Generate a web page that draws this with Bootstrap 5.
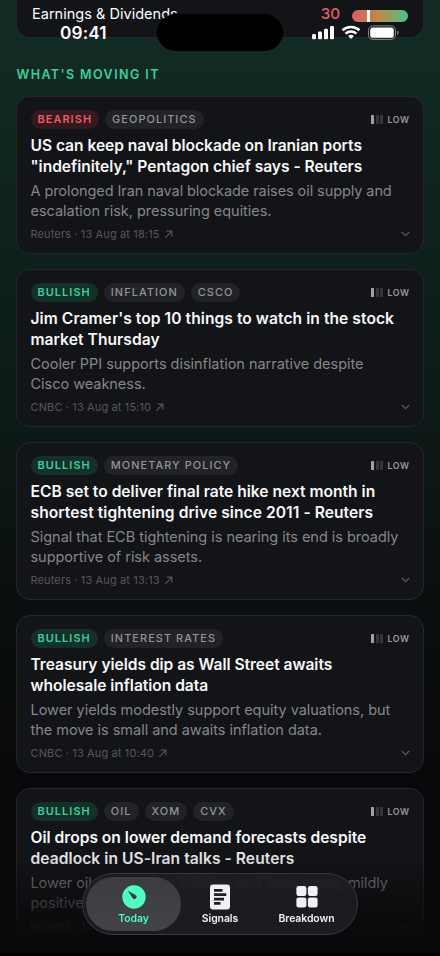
<!DOCTYPE html>
<html lang="en">
<head>
<meta charset="utf-8">
<meta name="viewport" content="width=device-width, initial-scale=1">
<title>Today</title>
<link rel="stylesheet" href="https://cdn.jsdelivr.net/npm/bootstrap@5.3.0/dist/css/bootstrap.min.css">
<style>
body{font-family:Inter,"Liberation Sans",sans-serif;background:#09090b;color:#fff;margin:0}
.screen{width:440px;height:956px;background:linear-gradient(180deg,#122c25 0,#112923 90px,#0e211c 250px,#0d1916 430px,#0a0e0e 620px,#09090b 790px,#09090b 952px,#000 953px)}
.panel{background:#131417;border:1px solid #25272a;border-radius:14px}
.factors{height:38px;margin:0 16px;border-top:0;border-radius:0 0 14px 14px;padding:5px 15px 0}
.factor-name{font-size:14.5px;line-height:18px;letter-spacing:.02px}
.factor-score{font-size:15.2px;line-height:18px;color:#e85d6b;font-weight:500;margin-right:12px}
.meter{width:56px;height:12px;border-radius:6px;background:linear-gradient(90deg,#de5c68,#bb8b4c 50%,#45c48c);margin-top:5px}
.meter i{display:block;width:3px;height:12px;background:#fff;margin-left:15px}
.statusbar{top:0;left:0;width:440px;height:60px}
.clock{left:60px;top:23px;font-size:17.3px;line-height:20px;font-weight:600;letter-spacing:.1px}
.island{left:157px;top:14px;width:126px;height:37px;border-radius:19px;background:#000}
.sig{left:311px;top:24px}
.section-title{color:#3ecf96;font-size:12.5px;line-height:16px;font-weight:600;letter-spacing:1.42px;margin:29px 0 13px 16.5px}
.feed{margin:0 16px;gap:15px}
.story{height:158px;padding:13px 13.5px 0}
.chips{gap:6px;height:19px}
.chip{height:19px;line-height:19px;border-radius:10px;padding:0 7px;font-size:10.9px;font-weight:500;letter-spacing:1.08px;background:#222327;color:#94959a}
.bull,.bear{font-weight:600}
.bull{background:#15302a;color:#3ecf96}
.bear{background:#34191f;color:#e85d6b}
.level{font-size:8.8px;font-weight:600;letter-spacing:.55px;color:#97989d;gap:1.5px}
.level i{width:3px;height:9px;background:#36373b;border-radius:.5px}
.level i:first-child{background:#a0a1a5}
.level span{margin-left:3px}
.headline{font-size:15.6px;line-height:21px;font-weight:600;margin:6px 0 0;white-space:nowrap;color:#f8f8fa}
.wide{letter-spacing:.06px}
.tight{letter-spacing:-.04px}
.summary{font-size:14.5px;line-height:20px;letter-spacing:-.03px;color:#85868b;margin:4px 0 0;white-space:nowrap}
.snug{letter-spacing:-.08px}
.source{font-size:11px;line-height:14px;letter-spacing:.13px;color:#56575c;margin-top:6px}
.fade-out{top:845px;left:0;width:440px;height:108px;background:linear-gradient(180deg,rgba(9,9,11,0) 0,rgba(9,9,11,.12) 15%,rgba(9,9,11,.36) 34%,rgba(9,9,11,.6) 53%,rgba(9,9,11,.87) 75%,rgba(9,9,11,.95))}
.tabs{left:82px;top:873px;width:276px;height:62px;border-radius:31px;background:rgba(30,31,35,.88);border:1px solid #38393d;padding:3px;backdrop-filter:blur(1.5px)}
.tab{width:95px;height:54px;margin-right:-8.5px;font-size:10.4px;line-height:13px;font-weight:600;letter-spacing:-.05px;padding-top:8px;gap:3px;color:#f1f1f6}
.tab.on{border-radius:27px;background:linear-gradient(180deg,rgba(61,62,66,.96),rgba(68,69,73,.96));color:#50f7be}
</style>
<script src="https://cdn.jsdelivr.net/npm/bootstrap@5.3.0/dist/js/bootstrap.bundle.min.js"></script>
</head>
<body>
<svg width="0" height="0" class="position-absolute"><defs>
<symbol id="out" viewBox="0 0 9 9"><path d="M1.200 7.800 7.600 1.400M2.600 1.200h5.200v5.200" fill="none" stroke="currentColor" stroke-width="1.200"/></symbol>
<symbol id="down" viewBox="0 0 9 6"><path d="M.8 1 4.500 4.700 8.200 1" fill="none" stroke="currentColor" stroke-width="1.300"/></symbol>
</defs></svg>
<main class="screen position-relative overflow-hidden">
  <section class="panel factors d-flex align-items-start">
    <span class="factor-name me-auto">Earnings &amp; Dividends</span>
    <span class="factor-score">30</span>
    <div class="meter"><i></i></div>
  </section>
  <h2 class="section-title">WHAT'S MOVING IT</h2>
  <div class="feed d-flex flex-column">
    <article class="panel story">
      <div class="chips d-flex align-items-center"><span class="chip bear">BEARISH</span><span class="chip">GEOPOLITICS</span><div class="level d-flex align-items-center ms-auto"><i></i><i></i><i></i><span>LOW</span></div></div>
      <h3 class="headline tight">US can keep naval blockade on Iranian ports<br>"indefinitely," Pentagon chief says - Reuters</h3>
      <p class="summary"><span class="snug">A prolonged Iran naval blockade raises oil supply and</span><br>escalation risk, pressuring equities.</p>
      <div class="source d-flex align-items-center"><span>Reuters · 13 Aug at 18:15</span><svg class="ms-1" width="9" height="9"><use href="#out"/></svg><svg class="ms-auto" width="9" height="6"><use href="#down"/></svg></div>
    </article>
    <article class="panel story">
      <div class="chips d-flex align-items-center"><span class="chip bull">BULLISH</span><span class="chip">INFLATION</span><span class="chip">CSCO</span><div class="level d-flex align-items-center ms-auto"><i></i><i></i><i></i><span>LOW</span></div></div>
      <h3 class="headline wide">Jim Cramer's top 10 things to watch in the stock<br>market Thursday</h3>
      <p class="summary">Cooler PPI supports disinflation narrative despite<br>Cisco weakness.</p>
      <div class="source d-flex align-items-center"><span>CNBC · 13 Aug at 15:10</span><svg class="ms-1" width="9" height="9"><use href="#out"/></svg><svg class="ms-auto" width="9" height="6"><use href="#down"/></svg></div>
    </article>
    <article class="panel story">
      <div class="chips d-flex align-items-center"><span class="chip bull">BULLISH</span><span class="chip">MONETARY POLICY</span><div class="level d-flex align-items-center ms-auto"><i></i><i></i><i></i><span>LOW</span></div></div>
      <h3 class="headline">ECB set to deliver final rate hike next month in<br><span class="wide">shortest tightening drive since 2011 - Reuters</span></h3>
      <p class="summary">Signal that ECB tightening is nearing its end is broadly<br>supportive of risk assets.</p>
      <div class="source d-flex align-items-center"><span>Reuters · 13 Aug at 13:13</span><svg class="ms-1" width="9" height="9"><use href="#out"/></svg><svg class="ms-auto" width="9" height="6"><use href="#down"/></svg></div>
    </article>
    <article class="panel story">
      <div class="chips d-flex align-items-center"><span class="chip bull">BULLISH</span><span class="chip">INTEREST RATES</span><div class="level d-flex align-items-center ms-auto"><i></i><i></i><i></i><span>LOW</span></div></div>
      <h3 class="headline tight">Treasury yields dip as Wall Street awaits<br>wholesale inflation data</h3>
      <p class="summary">Lower yields modestly support equity valuations, but<br>the move is small and awaits inflation data.</p>
      <div class="source d-flex align-items-center"><span>CNBC · 13 Aug at 10:40</span><svg class="ms-1" width="9" height="9"><use href="#out"/></svg><svg class="ms-auto" width="9" height="6"><use href="#down"/></svg></div>
    </article>
    <article class="panel story">
      <div class="chips d-flex align-items-center"><span class="chip bull">BULLISH</span><span class="chip">OIL</span><span class="chip">XOM</span><span class="chip">CVX</span><div class="level d-flex align-items-center ms-auto"><i></i><i></i><i></i><span>LOW</span></div></div>
      <h3 class="headline">Oil drops on lower demand forecasts despite<br><span class="wide">deadlock in US-Iran talks - Reuters</span></h3>
      <p class="summary"><span class="snug">Lower oil prices ease inflation and input costs, mildly</span><br>positive for equities.</p>
      <div class="source d-flex align-items-center"><span>Reuters · 13 Aug</span><svg class="ms-auto" width="9" height="6"><use href="#down"/></svg></div>
    </article>
  </div>

  <div class="fade-out position-absolute"></div>

  <header class="statusbar position-absolute">
    <span class="clock position-absolute">09:41</span>
    <div class="island position-absolute"></div>
    <svg class="sig position-absolute" width="90" height="18" viewBox="0 0 90 18" fill="#fff">
      <rect x="1" y="10" width="4" height="5.300" rx="1.200"/><rect x="7" y="7.500" width="4" height="7.800" rx="1.200"/><rect x="13" y="4.800" width="4" height="10.500" rx="1.200"/><rect x="19" y="2" width="4" height="13.300" rx="1.200"/>
      <path d="M31.500 6.300a12.400 12.400 0 0 1 17 0" fill="none" stroke="#fff" stroke-width="2.600"/><path d="M34.600 9.700a7.900 7.900 0 0 1 10.800 0" fill="none" stroke="#fff" stroke-width="2.500"/><path d="M40 15l-2.900-3a4.300 4.300 0 0 1 5.800 0z"/>
      <rect x="57.500" y="1.900" width="27" height="13.500" rx="4.300" fill="none" stroke="#85888a"/><rect x="59.200" y="3.600" width="23.600" height="10.100" rx="2.800"/><path d="M86.200 6.500c1.900.5 1.900 3.900 0 4.400z" fill="#85888a"/>
    </svg>
  </header>

  <nav class="tabs position-absolute d-flex">
    <div class="tab on d-flex flex-column align-items-center">
      <svg width="24" height="24" viewBox="0 0 24 24"><circle cx="12" cy="12" r="11.700" fill="#50fcc1"/><path d="M6.500 6.400 13.700 10.400a1.900 1.900 0 0 1-2.700 2.800z" fill="#343b3b" stroke="#343b3b" stroke-width=".6" stroke-linejoin="round"/></svg>
      <span>Today</span>
    </div>
    <div class="tab d-flex flex-column align-items-center">
      <svg width="20" height="24" viewBox="0 0 20 24" overflow="visible"><rect y="-.5" width="20" height="25" rx="3" fill="#f1f1f6"/><path d="M4 4h8.500v2.700H4zM4 8.300h12.300V11H4zM4 12.700h10v2.700H4zM4 17h6.500v2.700H4z" fill="#1e1f23"/></svg>
      <span>Signals</span>
    </div>
    <div class="tab d-flex flex-column align-items-center">
      <svg width="22" height="24" viewBox="0 0 22 24" fill="#f1f1f6"><rect x=".4" y="1" width="10" height="10" rx="2.200"/><rect x="11.900" y="1" width="9.700" height="10" rx="2.200"/><rect x=".4" y="12.400" width="10" height="10" rx="2.200"/><rect x="11.900" y="12.400" width="9.700" height="10" rx="2.200"/></svg>
      <span>Breakdown</span>
    </div>
  </nav>
</main>
</body>
</html>
